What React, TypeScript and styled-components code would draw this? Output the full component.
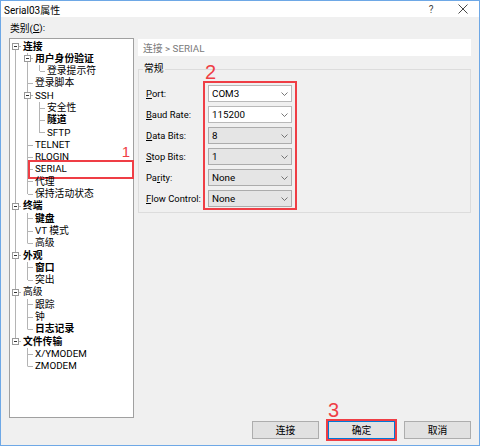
import styled, { createGlobalStyle } from 'styled-components';

const GlobalStyle = createGlobalStyle`
  html, body {
    margin: 0;
    padding: 0;
    background: #f0f0f0;
  }
`;

const Colors = {
  face: '#f0f0f0',
  frame: '#6ea8e6',
  line: '#b4b4b4',
  red: '#ef3e45',
  muted: '#7a7a7a',
};

type Node = {
  label: string;
  level: number;
  bold?: boolean;
  open?: boolean;
  mark?: boolean;
};

const nodes: Node[] = [
  { label: '连接', level: 0, bold: true, open: true },
  { label: '用户身份验证', level: 1, bold: true, open: true },
  { label: '登录提示符', level: 2 },
  { label: '登录脚本', level: 1 },
  { label: 'SSH', level: 1, open: true },
  { label: '安全性', level: 2 },
  { label: '隧道', level: 2, bold: true },
  { label: 'SFTP', level: 2 },
  { label: 'TELNET', level: 1 },
  { label: 'RLOGIN', level: 1 },
  { label: 'SERIAL', level: 1, mark: true },
  { label: '代理', level: 1 },
  { label: '保持活动状态', level: 1 },
  { label: '终端', level: 0, bold: true, open: true },
  { label: '键盘', level: 1, bold: true },
  { label: 'VT 模式', level: 1 },
  { label: '高级', level: 1 },
  { label: '外观', level: 0, bold: true, open: true },
  { label: '窗口', level: 1, bold: true },
  { label: '突出', level: 1 },
  { label: '高级', level: 0, open: true },
  { label: '跟踪', level: 1 },
  { label: '钟', level: 1 },
  { label: '日志记录', level: 1, bold: true },
  { label: '文件传输', level: 0, bold: true, open: true },
  { label: 'X/YMODEM', level: 1 },
  { label: 'ZMODEM', level: 1 },
];

// does the branch at `level` go on below row i?
const continues = (i: number, level: number) => {
  for (let j = i + 1; j < nodes.length; j++) {
    if (nodes[j].level <= level) return nodes[j].level === level;
  }
  return false;
};

const fields = [
  { key: 'P', rest: 'ort:', value: 'COM3', editable: true },
  { key: 'B', rest: 'aud Rate:', value: '115200', editable: true },
  { key: 'D', rest: 'ata Bits:', value: '8' },
  { key: 'S', rest: 'top Bits:', value: '1' },
  { pre: 'Pa', key: 'r', rest: 'ity:', value: 'None' },
  { key: 'F', rest: 'low Control:', value: 'None' },
];

const Window = styled.div`
  width: 480px;
  height: 446px;
  box-sizing: border-box;
  border: 1px solid ${Colors.frame};
  background: ${Colors.face};
  display: flex;
  flex-direction: column;
  font-family: Roboto, 'Noto Sans CJK SC', sans-serif;
  font-size: 9.8px;
  color: #000;
`;

const TitleBar = styled.div`
  height: 16px;
  background: #fff;
  display: flex;
  align-items: center;
  padding-left: 3px;
`;

const Title = styled.span`
  font-size: 10px;
`;

const TitleButton = styled.div`
  width: 32px;
  height: 16px;
  display: flex;
  align-items: center;
  justify-content: center;
  color: #444;
  font-size: 10px;

  &:first-of-type {
    margin-left: auto;
  }
`;

const Content = styled.div`
  flex: 1;
  display: flex;
  flex-direction: column;
  padding: 0 8px 6px 8px;
`;

const CategoryLabel = styled.div`
  height: 21px;
  display: flex;
  align-items: center;
  padding-left: 1px;
`;

const Main = styled.div`
  height: 380px;
  display: flex;
  gap: 4px;
`;

const Tree = styled.div`
  width: 125px;
  box-sizing: border-box;
  border: 1px solid #a0a0a0;
  background: #fff;
  padding-top: 1.5px;
`;

const Row = styled.div`
  position: relative;
  height: 12.3px;
  display: flex;
  align-items: stretch;
`;

const Guide = styled.div<{ $v?: 'full' | 'top' | 'bottom'; $h?: boolean }>`
  width: 12px;
  flex: none;
  display: flex;
  align-items: center;
  justify-content: center;
  box-sizing: border-box;
  padding-right: 1px;
  background-repeat: no-repeat;
  background-image: ${({ $v, $h }) =>
    [
      $v && `linear-gradient(${Colors.line}, ${Colors.line})`,
      $h && `linear-gradient(${Colors.line}, ${Colors.line})`,
    ]
      .filter(Boolean)
      .join(', ') || 'none'};
  background-size: ${({ $v, $h }) =>
    [$v && ($v === 'full' ? '1px 100%' : '1px 50%'), $h && '5px 1px'].filter(Boolean).join(', ') ||
    'auto'};
  background-position: ${({ $v, $h }) =>
    [$v && ($v === 'bottom' ? '5px 100%' : '5px 0'), $h && '6px 50%'].filter(Boolean).join(', ') ||
    '0 0'};
`;

const Expander = styled.span`
  width: 7px;
  height: 7px;
  box-sizing: border-box;
  border: 1px solid #999;
  background: linear-gradient(#333, #333) center / 3px 1px no-repeat, #fff;
`;

const NodeLabel = styled.span<{ $bold?: boolean }>`
  line-height: 12.3px;
  white-space: nowrap;
  padding-left: 1px;
  font-weight: ${({ $bold }) => ($bold ? 700 : 400)};
`;

const Mark = styled.span`
  position: absolute;
  left: 18px;
  right: -1px;
  top: -3px;
  bottom: -3px;
  border: 2px solid ${Colors.red};
`;

const Digit = styled.span<{ $size: number }>`
  position: absolute;
  font-family: 'Liberation Sans', sans-serif;
  font-size: ${({ $size }) => $size}px;
  line-height: 1;
  color: ${Colors.red};
`;

const RightPane = styled.div`
  flex: 1;
  display: flex;
  flex-direction: column;
`;

const Breadcrumb = styled.div`
  height: 17px;
  margin-top: 1px;
  background: #fff;
  color: ${Colors.muted};
  display: flex;
  align-items: center;
  padding-left: 5px;
`;

const GroupBox = styled.fieldset`
  margin: 7px 0 0 0;
  border: 1px solid #dcdcdc;
  padding: 0 4px 2px 4px;
`;

const Legend = styled.legend`
  padding: 0 1px;
  line-height: 12px;
`;

const Form = styled.div`
  display: flex;
  margin: 6px 0 0 3px;
`;

const Labels = styled.div`
  width: 57px;
  display: flex;
  flex-direction: column;
  gap: 4px;
  padding-top: 4px;
  font-size: 9.4px;
`;

const FieldLabel = styled.div`
  height: 17px;
  display: flex;
  align-items: center;
  white-space: nowrap;
`;

const Key = styled.span`
  text-decoration: underline;
`;

const ComboColumn = styled.div`
  position: relative;
  border: 2px solid ${Colors.red};
  padding: 2px 3px 1px 3px;
  display: flex;
  flex-direction: column;
  gap: 4px;
`;

const Combo = styled.div<{ $editable?: boolean }>`
  width: 84px;
  height: 17px;
  box-sizing: border-box;
  border: 1px solid ${({ $editable }) => ($editable ? '#b9b9b9' : '#acacac')};
  background: ${({ $editable }) => ($editable ? '#fff' : '#e5e5e5')};
  display: flex;
  align-items: center;
  padding: 0 3px 0 3px;
`;

const Chevron = styled.svg`
  margin-left: auto;
  width: 7px;
  height: 4px;
`;

const Footer = styled.div`
  display: flex;
  justify-content: flex-end;
  gap: 9px;
  margin-top: 3px;
`;

const Button = styled.div<{ $default?: boolean }>`
  position: relative;
  width: 67px;
  height: 18px;
  box-sizing: border-box;
  border: 1px solid ${({ $default }) => ($default ? '#0078d7' : '#adadad')};
  background: #e1e1e1;
  display: flex;
  align-items: center;
  justify-content: center;
  outline: ${({ $default }) => ($default ? `2px solid ${Colors.red}` : 'none')};
  outline-offset: 0;
`;

const TreeView = () => (
  <Tree>
    {nodes.map((node, i) => {
      const guides = [];
      for (let a = 0; a < node.level; a++) {
        guides.push(<Guide key={a} $v={continues(i, a) ? 'full' : undefined} />);
      }
      const more = continues(i, node.level);
      const own = i === 0 ? (more ? 'bottom' : undefined) : more ? 'full' : 'top';
      return (
        <Row key={i}>
          {guides}
          <Guide $v={own} $h>
            {node.open && <Expander />}
          </Guide>
          <NodeLabel $bold={node.bold}>{node.label}</NodeLabel>
          {node.mark && (
            <Mark>
              <Digit $size={15} style={{ right: 2, top: -18 }}>
                1
              </Digit>
            </Mark>
          )}
        </Row>
      );
    })}
  </Tree>
);

export default function App() {
  return (
    <>
      <GlobalStyle />
      <Window>
        <TitleBar>
          <Title>Serial03属性</Title>
          <TitleButton>?</TitleButton>
          <TitleButton>
            <svg width="10" height="10" viewBox="0 0 10 10">
              <path d="M0.5 0.5 L9.5 9.5 M9.5 0.5 L0.5 9.5" stroke="#333" strokeWidth="0.9" />
            </svg>
          </TitleButton>
        </TitleBar>
        <Content>
          <CategoryLabel>
            类别(<Key>C</Key>):
          </CategoryLabel>
          <Main>
            <TreeView />
            <RightPane>
              <Breadcrumb>连接 &gt; SERIAL</Breadcrumb>
              <GroupBox>
                <Legend>常规</Legend>
                <Form>
                  <Labels>
                    {fields.map((f) => (
                      <FieldLabel key={f.key}>
                        {f.pre}
                        <Key>{f.key}</Key>
                        {f.rest}
                      </FieldLabel>
                    ))}
                  </Labels>
                  <ComboColumn>
                    <Digit $size={20} style={{ left: 0, top: -21 }}>
                      2
                    </Digit>
                    {fields.map((f) => (
                      <Combo key={f.key} $editable={f.editable}>
                        {f.value}
                        <Chevron viewBox="0 0 7 4">
                          <path d="M0.5 0.5 L3.5 3.5 L6.5 0.5" fill="none" stroke="#555" strokeWidth="0.8" />
                        </Chevron>
                      </Combo>
                    ))}
                  </ComboColumn>
                </Form>
              </GroupBox>
            </RightPane>
          </Main>
          <Footer>
            <Button>连接</Button>
            <Button $default>
              <Digit $size={20} style={{ left: -1, top: -22 }}>
                3
              </Digit>
              确定
            </Button>
            <Button>取消</Button>
          </Footer>
        </Content>
      </Window>
    </>
  );
}
